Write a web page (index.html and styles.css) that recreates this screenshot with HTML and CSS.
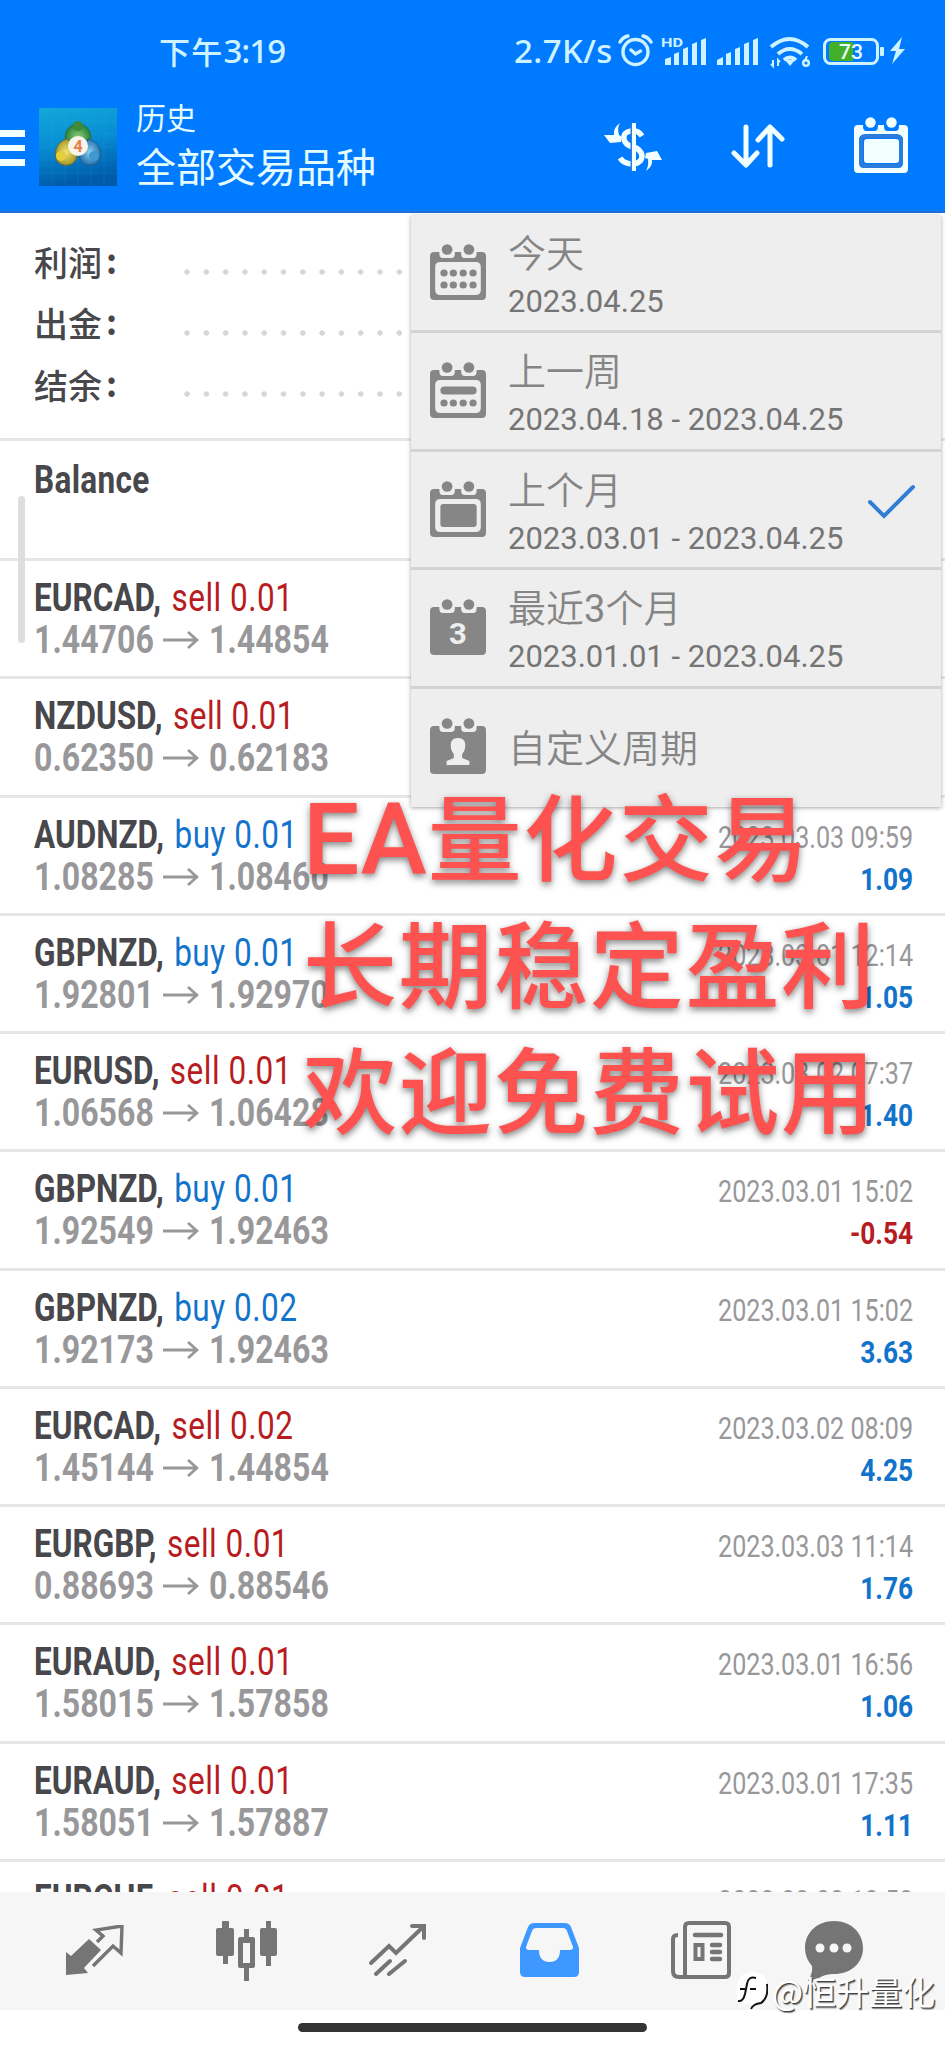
FILE: index.html
```html
<!DOCTYPE html>
<html lang="zh-CN">
<head>
<meta charset="utf-8">
<title>历史</title>
<link rel="stylesheet" href="styles.css">
</head>
<body>
<svg width="0" height="0" class="defs">
  <defs>
    <symbol id="arrow" viewBox="0 0 36 20"><path d="M0 10H34M25 2l9 8-9 8" fill="none" stroke="#98989b" stroke-width="2.8"/></symbol>
    <symbol id="cal-solid" viewBox="0 0 54 56">
      <path d="M4 8H9C9 15 11 14 16.500 14S24 15 24 8H30C30 15 32 14 37.500 14S45 15 45 8H50Q54 8 54 12V52Q54 56 50 56H4Q0 56 0 52V12Q0 8 4 8Z"/>
      <circle cx="16.500" cy="5.500" r="5.200"/><circle cx="37.500" cy="5.500" r="5.200"/>
    </symbol>
    <symbol id="cal-open" viewBox="0 0 54 56">
      <path fill-rule="evenodd" d="M4 8H9C9 15 11 14 16.500 14S24 15 24 8H30C30 15 32 14 37.500 14S45 15 45 8H50Q54 8 54 12V52Q54 56 50 56H4Q0 56 0 52V12Q0 8 4 8ZM10 18Q5 18 5 23V46Q5 51 10 51H44Q49 51 49 46V23Q49 18 44 18Z"/>
      <circle cx="16.500" cy="5.500" r="5.200"/><circle cx="37.500" cy="5.500" r="5.200"/>
    </symbol>
  </defs>
</svg>
<div class="screen">
  <header class="header">
    <div class="status">
      <div class="clock"><span>下午</span><span class="digits">3:19</span></div>
      <div class="speed">2.7K/s</div>
      <svg class="status-icons" width="296" height="36" viewBox="618 33 296 36" fill="#ccf3ff">
        <g fill="none" stroke="#ccf3ff" stroke-width="3.400" stroke-linecap="round"><circle cx="635.500" cy="52" r="12.500"/><path d="M631 50l4.500 4 5-3M620 42q3-5 8-6M651 42q-3-5-8-6"/></g>
        <text x="661" y="46.500" class="hd" textLength="22" lengthAdjust="spacingAndGlyphs">HD</text>
        <path d="M665 59l6-2v8h-6zM674 54l5-2v13h-5zM683 49l5-2v18h-5zM692 44l5-2v23h-5zM701 40l5-2v27h-5zM717 60l6-3v8h-6zM726 54l5-2v13h-5zM735 49l5-2v18h-5zM744 44l5-2v23h-5zM753 40l5-2v27h-5z"/>
        <g fill="none" stroke="#ccf3ff" stroke-width="4"><path d="M771 47q18.500-16 37 0M778 54q11.500-10 24 0"/><path d="M784 60q6-5 12 0"/></g>
        <path d="M785 60l5 6 5-6z"/><path d="M773 60v6l-2-2M778 66v-6l2 2" fill="none" stroke="#ccf3ff" stroke-width="2"/><circle cx="806" cy="63" r="2.800" fill="none" stroke="#ccf3ff" stroke-width="2.500"/><path d="M803 62l3-6h2l-2 5z"/>
        <rect x="824.500" y="39.500" width="53" height="24" rx="6" fill="none" stroke="#ccf3ff" stroke-width="3"/>
        <path d="M833 42h20v19h-20q-4 0-4-4V46q0-4 4-4z" fill="#43b02a"/><rect x="880" y="47" width="4" height="9" rx="1"/>
        <text x="839" y="59" class="battery" textLength="24" lengthAdjust="spacingAndGlyphs">73</text>
        <path d="M902 37l-12 14h6l-4 13 13-15h-6z"/>
      </svg>
    </div>
    <div class="appbar">
      <svg class="burger" width="25" height="37" viewBox="0 0 25 37" fill="#f2ffff"><path d="M0 0h25v7H0zM0 15h25v6H0zM0 29h25v7H0z"/></svg>
      <svg class="logo" width="78" height="78" viewBox="0 0 78 78">
        <defs><linearGradient id="lg" x1="0" y1="0" x2=".2" y2="1"><stop offset="0" stop-color="#13a8da"/><stop offset=".5" stop-color="#078dd3"/><stop offset="1" stop-color="#005bab"/></linearGradient>
        <radialGradient id="gr"><stop offset="0" stop-color="#8ece78"/><stop offset="1" stop-color="#27813d"/></radialGradient>
        <radialGradient id="ye"><stop offset="0" stop-color="#f2e56c"/><stop offset="1" stop-color="#a79828"/></radialGradient>
        <radialGradient id="bl"><stop offset="0" stop-color="#8fcff0"/><stop offset="1" stop-color="#2373ae"/></radialGradient></defs>
        <rect width="78" height="78" fill="url(#lg)"/>
        <path d="M13 0V78M26 0V78M39 0V78M52 0V78M65 0V78M0 13H78M0 26H78M0 39H78M0 52H78M0 65H78" stroke="#3ab7ea" stroke-opacity=".18" stroke-width=".8"/>
        <circle cx="39" cy="29" r="13" fill="url(#gr)" stroke="#2c6f3c"/><circle cx="39" cy="18" r="5" fill="#3f8a3a"/>
        <path d="M29 31C16 33 14 49 19 54S36 59 38 48Z" fill="url(#ye)" stroke="#6d6c2c"/><circle cx="22" cy="48" r="5" fill="#e3cf3d"/>
        <path d="M49 31C62 33 64 49 59 54S42 59 40 48Z" fill="url(#bl)" stroke="#1f5d8e"/><circle cx="55" cy="48" r="5" fill="#3f98d2"/>
        <circle cx="39" cy="38" r="10" fill="#f7f4ea"/><text x="34.500" y="44" class="logo-num">4</text>
      </svg>
      <div class="titles"><div class="sub">历史</div><div class="main">全部交易品种</div></div>
      <svg class="a-dollar" width="58" height="50" viewBox="0 0 58 50" fill="none" stroke="#f2ffff">
        <path d="M38 14Q34 8 27 9Q19 10 20 17Q21 23 29 25T38 34Q38 41 29 42Q20 42 16 36" stroke-width="5.500"/><path d="M27.500 2V49" stroke="#2a7ddc" stroke-width="2"/><path d="M30 1V49" stroke-width="4"/>
        <path d="M16 1Q9 6 10 13H0l6 8 11-1 1-5-3-2Q13 6 16 1ZM42 49Q49 44 48 38H58L53 29 42 31 41 36l3 1Q45 43 42 49Z" fill="#f2ffff" stroke="none"/>
      </svg>
      <svg class="a-sort" width="54" height="44" viewBox="0 0 54 44" fill="none" stroke="#f2ffff" stroke-width="5" stroke-linecap="round" stroke-linejoin="round"><path d="M15 3V40M3 29L15 41 26 29M39 41V4M27 16L39 3 51 15"/></svg>
      <svg class="a-cal" width="56" height="56" viewBox="0 0 54 56" fill="#f2ffff"><use href="#cal-open"/><rect x="7" y="19" width="40" height="30" rx="4" fill="none" stroke="#2a7ddc" stroke-width="4"/><rect x="10" y="22" width="35" height="24" rx="3"/></svg>
    </div>
  </header>

  <section class="summary">
    <div class="sum-row"><span>利润</span><b>:</b><i class="dots"></i></div>
    <div class="sum-row"><span>出金</span><b>:</b><i class="dots"></i></div>
    <div class="sum-row"><span>结余</span><b>:</b><i class="dots"></i></div>
  </section>

  <main class="list">
    <div class="row first"><div class="l"><p class="cond"><b class="wide">Balance</b></p></div></div>
    <div class="row"><div class="l"><p class="cond"><b>EURCAD,</b> <span class="sell">sell 0.01</span></p><p class="prices"><span>1.44706</span><svg><use href="#arrow"/></svg><span>1.44854</span></p></div></div>
    <div class="row"><div class="l"><p class="cond"><b>NZDUSD,</b> <span class="sell">sell 0.01</span></p><p class="prices"><span>0.62350</span><svg><use href="#arrow"/></svg><span>0.62183</span></p></div></div>
    <div class="row"><div class="l"><p class="cond"><b>AUDNZD,</b> <span class="buy">buy 0.01</span></p><p class="prices"><span>1.08285</span><svg><use href="#arrow"/></svg><span>1.08460</span></p></div><div class="r"><p class="date">2023.03.03 09:59</p><p class="pl buy">1.09</p></div></div>
    <div class="row"><div class="l"><p class="cond"><b>GBPNZD,</b> <span class="buy">buy 0.01</span></p><p class="prices"><span>1.92801</span><svg><use href="#arrow"/></svg><span>1.92970</span></p></div><div class="r"><p class="date">2023.03.01 12:14</p><p class="pl buy">1.05</p></div></div>
    <div class="row"><div class="l"><p class="cond"><b>EURUSD,</b> <span class="sell">sell 0.01</span></p><p class="prices"><span>1.06568</span><svg><use href="#arrow"/></svg><span>1.06428</span></p></div><div class="r"><p class="date">2023.03.02 07:37</p><p class="pl buy">1.40</p></div></div>
    <div class="row"><div class="l"><p class="cond"><b>GBPNZD,</b> <span class="buy">buy 0.01</span></p><p class="prices"><span>1.92549</span><svg><use href="#arrow"/></svg><span>1.92463</span></p></div><div class="r"><p class="date">2023.03.01 15:02</p><p class="pl sell">-0.54</p></div></div>
    <div class="row"><div class="l"><p class="cond"><b>GBPNZD,</b> <span class="buy">buy 0.02</span></p><p class="prices"><span>1.92173</span><svg><use href="#arrow"/></svg><span>1.92463</span></p></div><div class="r"><p class="date">2023.03.01 15:02</p><p class="pl buy">3.63</p></div></div>
    <div class="row"><div class="l"><p class="cond"><b>EURCAD,</b> <span class="sell">sell 0.02</span></p><p class="prices"><span>1.45144</span><svg><use href="#arrow"/></svg><span>1.44854</span></p></div><div class="r"><p class="date">2023.03.02 08:09</p><p class="pl buy">4.25</p></div></div>
    <div class="row"><div class="l"><p class="cond"><b>EURGBP,</b> <span class="sell">sell 0.01</span></p><p class="prices"><span>0.88693</span><svg><use href="#arrow"/></svg><span>0.88546</span></p></div><div class="r"><p class="date">2023.03.03 11:14</p><p class="pl buy">1.76</p></div></div>
    <div class="row"><div class="l"><p class="cond"><b>EURAUD,</b> <span class="sell">sell 0.01</span></p><p class="prices"><span>1.58015</span><svg><use href="#arrow"/></svg><span>1.57858</span></p></div><div class="r"><p class="date">2023.03.01 16:56</p><p class="pl buy">1.06</p></div></div>
    <div class="row"><div class="l"><p class="cond"><b>EURAUD,</b> <span class="sell">sell 0.01</span></p><p class="prices"><span>1.58051</span><svg><use href="#arrow"/></svg><span>1.57887</span></p></div><div class="r"><p class="date">2023.03.01 17:35</p><p class="pl buy">1.11</p></div></div>
    <div class="row"><div class="l"><p class="cond"><b>EURCHF,</b> <span class="sell">sell 0.01</span></p></div><div class="r"><p class="date">2023.03.03 10:52</p></div></div>
  </main>

  <nav class="tabs">
    <svg class="t1" width="58" height="52" viewBox="0 0 58 52"><path d="M0 27L5 31 23 14 35 25 18 43 22 48 0 50Z" fill="#757575"/><path d="M31 17L37 11 30 5 56 1 55 28 47 21 27 41" fill="none" stroke="#757575" stroke-width="3.400"/></svg>
    <svg class="t2" width="62" height="60" viewBox="0 0 62 60" fill="#757575"><path d="M7 0h5q1 0 1 1v6h3q2 0 2 2v24q0 2-2 2h-4v8H7v-8H2q-2 0-2-2V9q0-2 2-2h4V1q0-1 1-1zM50 0h5v7h4q2 0 2 2v24q0 2-2 2h-4v10h-5V35h-4q-2 0-2-2V9q0-2 2-2h4z"/><path fill-rule="evenodd" d="M28 8h5v8h4q2 0 2 2v27q0 2-2 2h-4v13h-5V47h-4q-2 0-2-2V18q0-2 2-2h4zM27 22v20h7V22z"/></svg>
    <svg class="t3" width="58" height="54" viewBox="0 0 58 54" fill="none" stroke="#757575" stroke-width="4" stroke-linecap="round"><path d="M2 40L20 23 27 30 54 4M43 3H55V15M7 51L21 38M20 51L36 38"/></svg>
    <svg class="t4" width="59" height="54" viewBox="0 0 59 54" fill="#3f98ff"><path fill-rule="evenodd" d="M14 0H45Q49 0 51 4L59 25V49Q59 54 54 54H5Q0 54 0 49V25L8 4Q10 0 14 0ZM16 5Q13 5 12 8L6 24Q6 27 9 27H19Q19 39 29.500 39T40 27H50Q53 27 53 24L47 8Q46 5 43 5Z"/></svg>
    <svg class="t5" width="60" height="58" viewBox="0 0 60 58" fill="none" stroke="#757575" stroke-width="4"><path d="M7 56H54Q58 56 58 52V6Q58 2 54 2H18Q14 2 14 6V56M7 14Q2 14 2 18V50Q2 56 8 56"/><path d="M24 14H50M41 24H49M41 31H49M41 38H49" stroke-width="4.500" stroke-linecap="round"/><rect x="24.500" y="24" width="7" height="14"/></svg>
    <svg class="t6" width="58" height="60" viewBox="0 0 58 60"><path d="M29 0C45 0 58 11 58 27S45 53 29 53Q20 53 14 57L3 60Q8 52 7 45Q0 37 0 27C0 11 13 0 29 0Z" fill="#757575"/><g fill="#f6f6f6"><circle cx="15" cy="27" r="4.500"/><circle cx="29" cy="27" r="4.500"/><circle cx="42" cy="27" r="4.500"/></g></svg>
  </nav>
  <footer class="home"><i></i></footer>

  <i class="scrollbar"></i>
  <aside class="menu">
    <div class="item"><svg width="56" height="56" viewBox="0 0 54 56" preserveAspectRatio="none"><use href="#cal-open"/><g><circle cx="13.500" cy="29" r="3.500"/><circle cx="22.500" cy="29" r="3.500"/><circle cx="32" cy="29" r="3.500"/><circle cx="41.500" cy="29" r="3.500"/><circle cx="13.500" cy="41" r="3.500"/><circle cx="22.500" cy="41" r="3.500"/><circle cx="32" cy="41" r="3.500"/><circle cx="41.500" cy="41" r="3.500"/></g></svg><div><p class="mt">今天</p><p class="md">2023.04.25</p></div></div>
    <div class="item"><svg width="56" height="56" viewBox="0 0 54 56" preserveAspectRatio="none"><use href="#cal-open"/><rect x="10" y="24.500" width="35" height="8" rx="4"/><circle cx="13.500" cy="41" r="3.500"/><circle cx="22.500" cy="41" r="3.500"/><circle cx="32" cy="41" r="3.500"/><circle cx="41.500" cy="41" r="3.500"/></svg><div><p class="mt">上一周</p><p class="md">2023.04.18 - 2023.04.25</p></div></div>
    <div class="item"><svg width="56" height="56" viewBox="0 0 54 56" preserveAspectRatio="none"><use href="#cal-open"/><rect x="10" y="23" width="35" height="23" rx="3"/></svg><div><p class="mt">上个月</p><p class="md">2023.03.01 - 2023.04.25</p></div><svg class="check" width="50" height="38" viewBox="0 0 50 38"><path d="M3 19L17 33 46 4" fill="none" stroke="#2f7fd6" stroke-width="4" stroke-linecap="round"/></svg></div>
    <div class="item"><svg width="56" height="56" viewBox="0 0 54 56" preserveAspectRatio="none"><use href="#cal-solid"/><text x="27" y="45" text-anchor="middle" class="three">3</text></svg><div><p class="mt">最近<span class="n">3</span>个月</p><p class="md">2023.01.01 - 2023.04.25</p></div></div>
    <div class="item"><svg width="56" height="56" viewBox="0 0 54 56" preserveAspectRatio="none"><use href="#cal-solid"/><path fill="#eee" d="M27 20Q34 20 34 27Q34 33 31 36V40L38 43V47H16V43L23 40V36Q20 33 20 27Q20 20 27 20Z"/></svg><div><p class="mt">自定义周期</p></div></div>
  </aside>
  <div class="promo"><p><span class="latin">EA</span>量化交易</p><p>长期稳定盈利</p><p>欢迎免费试用</p></div>
  <div class="mark"><svg width="32" height="38" viewBox="0 0 32 38"><path d="M5 4Q16-4 28 4Q34 14 29 26Q26 32 17 35L14 31Q8 34 2 29Q-2 14 5 4Z" fill="#fff"/><path d="M4 17h5M14 17h6M20 6Q12 4 11 12L9 22Q7 30 2 29M31 12Q33 25 25 31Q17 32 15 37" fill="none" stroke="#111" stroke-width="2"/></svg><span>@恒升量化</span></div>
</div>
</body>
</html>
```
FILE: styles.css
```css
* { box-sizing: border-box; }
body { margin: 0; background: #fff; font-family: Roboto, "Noto Sans CJK SC", sans-serif; }
p { margin: 0; }
.defs { position: absolute; }
.screen { position: relative; width: 945px; height: 2048px; overflow: hidden; display: flex; flex-direction: column; }

.header { height: 213px; flex: none; background: #007aff; border-bottom: 2px solid #1b72d4; color: #ccf3ff; }
.status { display: flex; align-items: center; height: 102px; padding-left: 159px; }
.clock { display: flex; align-items: center; width: 355px; font: 500 31px/40px "Noto Sans CJK SC", sans-serif; letter-spacing: 1.2px; }
.digits { font: 500 33px/40px "Noto Sans", sans-serif; letter-spacing: -1px; }
.speed { width: 104px; font: 500 33px/40px "Noto Sans", sans-serif; letter-spacing: .4px; white-space: nowrap; }
.hd { font: 700 12px Roboto, sans-serif; }
.battery { font: 500 20px Roboto, sans-serif; fill: #e8fbff; }
.appbar { display: flex; align-items: flex-start; }
.burger { margin-top: 28px; }
.logo { margin: 6px 19px 0 14px; }
.logo-num { font: 700 16px Roboto, sans-serif; fill: #e4804b; }
.titles { width: 468px; font-family: "Noto Sans CJK SC", sans-serif; color: #e4fbff; white-space: nowrap; }
.sub { font-size: 30px; line-height: 34px; margin-top: -3px; }
.main { font-size: 40px; line-height: 48px; margin-top: 8px; }
.a-dollar { margin: 20px 69px 0 0; }
.a-sort { margin: 22px 68px 0 0; }
.a-cal { margin-top: 15px; }

.summary { height: 228px; flex: none; padding: 18px 34px 0; border-bottom: 3px solid #e6e6e6; font: 500 34px/61.3px "Noto Sans CJK SC", sans-serif; color: #47474c; }
.sum-row { display: flex; align-items: center; height: 61.3px; }
.sum-row b { width: 82px; padding: 0 0 4px 4px; font-family: "Noto Sans CJK SC", sans-serif; }
.dots { width: 234px; height: 6px; margin-top: 20px; background: radial-gradient(circle at 3px 3px, #d6d6d6 2.4px, transparent 3px) 0 0 / 19.3px 6px repeat-x; }

.list { height: 1451px; flex: none; overflow: hidden; }
.row { display: flex; justify-content: space-between; height: 118.27px; padding: 16px 32px 0 34px; border-bottom: 3px solid #e6e6e6; }
.first { height: 120px; padding-top: 18px; }
.l p { height: 42px; font-size: 38px; line-height: 42px; white-space: nowrap; color: #47474c; }
.l .cond { transform: scaleX(.83); transform-origin: left; }
.cond span { letter-spacing: .6px; margin-left: 3px; }
.wide { letter-spacing: .4px; }
.l .prices { display: flex; align-items: center; color: #98989b; font-weight: 700; }
.prices span { width: 120px; transform: scaleX(.845); transform-origin: left; }
.prices svg { width: 36px; height: 20px; margin: 0 10px 0 9px; }
.r { padding-top: 2px; width: 195px; }
.r p { height: 42px; font-size: 32px; line-height: 42px; white-space: nowrap; display: flex; justify-content: flex-end; transform-origin: right; }
.r .date { color: #98989b; transform: scaleX(.785); }
.r .pl { font-weight: 700; transform: scaleX(.82); }
.l .sell, .sell { color: #b71c1f; }
.l .buy, .buy { color: #1273cb; }

.tabs { height: 118px; flex: none; background: #f6f6f6; display: flex; align-items: flex-start; padding-left: 66px; }
.t1 { margin: 33px 92px 0 0; }
.t2 { margin: 29px 91px 0 0; }
.t3 { margin: 31px 93px 0 0; }
.t4 { margin: 31px 92px 0 0; }
.t5 { margin: 29px 74px 0 0; }
.t6 { margin: 29px 0 0; }
.home { padding: 13px 0 0 298px; }
.home i { display: block; width: 349px; height: 9px; border-radius: 5px; background: #333; }

.scrollbar { position: absolute; left: 18px; top: 496px; width: 7px; height: 147px; border-radius: 4px; background: #dedede; }
.menu { position: absolute; left: 411px; top: 215px; width: 530px; height: 592px; background: #eee; box-shadow: 0 1px 4px rgba(0,0,0,.35); }
.item { display: flex; height: 118.4px; padding-left: 19px; border-bottom: 3px solid #d3d3d3; fill: #868686; }
.item:last-child { border: 0; }
.item > svg { margin: 29px 22px 0 0; flex: none; }
.mt { height: 52px; margin-top: 10px; font: 350 38px/52px "Noto Sans CJK SC", sans-serif; color: #858585; white-space: nowrap; }
.mt .n { font: 400 38px/1 Roboto, sans-serif; }
.md { margin-top: 4px; font-size: 31px; line-height: 42px; color: #757575; white-space: nowrap; }
.item:last-child .mt { margin-top: 31px; }
.item > .check { margin: 31px 0 0 24px; }
.three { font: 700 30px Roboto, sans-serif; fill: #eee; }

.promo { position: absolute; left: 303px; top: 770px; font: 500 94px/126.5px "Noto Sans CJK SC", sans-serif; letter-spacing: 1.6px; color: #fd524f; white-space: nowrap; text-shadow: 0 3px 7px rgba(0,0,0,.5); }
.latin { font: 500 100px/1 Roboto, sans-serif; letter-spacing: 1px; }
.mark { position: absolute; left: 736px; top: 1971px; display: flex; align-items: center; gap: 4px; font: 400 33px/40px "Noto Sans CJK SC", sans-serif; color: #fff; text-shadow: 1px 1px 0 #444, 1.5px 1.5px 1px #888; white-space: nowrap; }
```
